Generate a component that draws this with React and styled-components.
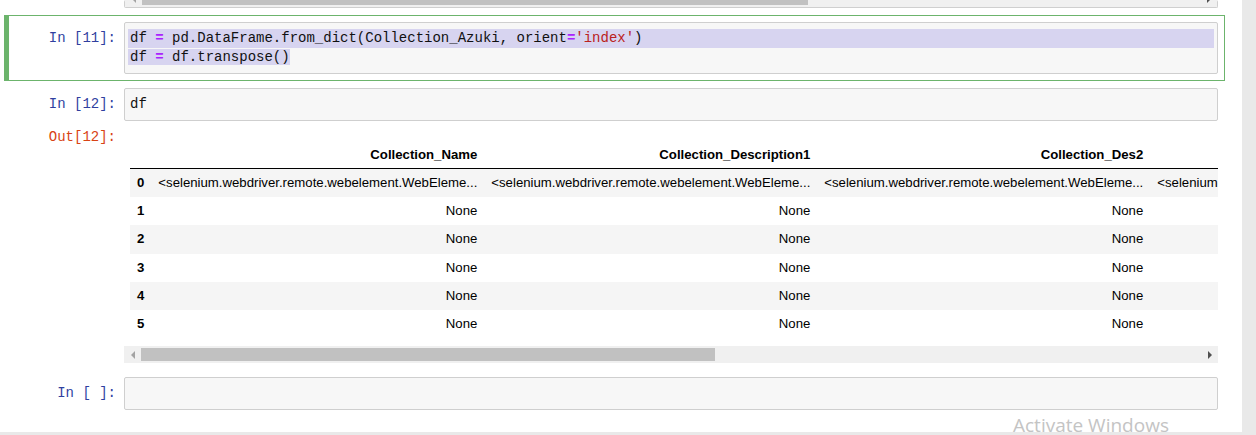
import React from 'react';
import styled, { createGlobalStyle } from 'styled-components';

const GlobalStyle = createGlobalStyle`
  html, body {
    margin: 0;
    padding: 0;
    background: #e9e9e9;
    overflow: hidden;
  }
`;

const Notebook = styled.div`
  position: relative;
  width: 1242px;
  height: 432px;
  background: #fff;
  overflow: hidden;
`;

const Cell = styled.div`
  box-sizing: border-box;
  width: 1221px;
  margin-left: 4px;
  border: 1px solid ${p => (p.$selected ? '#6cb46c' : 'transparent')};
  border-left-width: 5px;
  border-top-width: ${p => (p.$clipped ? '0' : '1px')};
  padding: ${p => (p.$clipped ? '0 6px 6px' : '6px')};
  display: flex;
  flex-direction: column;
`;

const Row = styled.div`
  display: flex;
  align-items: flex-start;
`;

const Prompt = styled.div`
  box-sizing: border-box;
  width: 109px;
  flex: none;
  padding: ${p => (p.$empty ? '0' : '7px 8px 0 0')};
  text-align: right;
  font-family: 'Liberation Mono', monospace;
  font-size: 14px;
  line-height: 19px;
  color: ${p => (p.$out ? '#d84315' : '#303f9f')};
  white-space: pre;
`;

const InputBox = styled.div`
  flex: 1;
  min-width: 0;
  box-sizing: border-box;
  height: ${p => p.$height || 'auto'};
  overflow: hidden;
  background: #f7f7f7;
  border: 1px solid #cfcfcf;
  border-top-width: ${p => (p.$clipped ? '0' : '1px')};
  border-radius: 2px;
  padding: ${p => (p.$clipped ? '0' : '6px 3px')};
  font-family: 'Liberation Mono', monospace;
  font-size: 14px;
  line-height: 19px;
  color: #111;
`;

const Line = styled.div`
  min-height: 19px;
  white-space: pre;
  padding-left: 2px;
  background: ${p => (p.$full ? '#d7d4f0' : 'transparent')};
`;

const Sel = styled.span`
  background: #d7d4f0;
  margin-left: -2px;
  padding-left: 2px;
`;

const Op = styled.span`
  color: #aa22ff;
  font-weight: bold;
`;

const Str = styled.span`
  color: #ba2121;
`;

const ScrollBar = styled.div`
  display: flex;
  height: 17px;
  flex: none;
  background: #f0f0f0;
  margin-top: ${p => p.$offset || '0'};
`;

const ArrowBtn = styled.div`
  width: 17px;
  flex: none;
  display: flex;
  align-items: center;
  justify-content: center;
`;

const Triangle = styled.span`
  width: 0;
  height: 0;
  border-top: 4px solid transparent;
  border-bottom: 4px solid transparent;
  ${p =>
    p.$dir === 'left'
      ? `border-right: 4px solid #a3a3a3;`
      : `border-left: 4px solid #505050;`}
`;

const Thumb = styled.div`
  flex: none;
  margin: 2px 0;
  background: #c1c1c1;
`;

const Spacer = styled.div`
  flex: 1;
`;

const OutputBody = styled.div`
  flex: 1;
  min-width: 0;
  overflow: hidden;
`;

const TableScroll = styled.div`
  overflow: hidden;
  padding: 20px 0 8px 6px;
`;

const Table = styled.table`
  border-collapse: collapse;
  border-spacing: 0;
  font-family: 'Liberation Sans', Arial, sans-serif;
  font-size: 13.2px;
  color: #000;

  th, td {
    padding: 7px;
    line-height: 14.2px;
    text-align: right;
    white-space: nowrap;
    vertical-align: middle;
  }

  thead th {
    line-height: 14px;
    padding-bottom: 6px;
    border-bottom: 1px solid #000;
    font-weight: bold;
  }

  tbody th {
    font-weight: bold;
    text-align: left;
  }

  tbody tr:nth-child(odd) {
    background: #f5f5f5;
  }
`;

const Watermark = styled.div`
  position: absolute;
  left: 1013px;
  top: 415px;
  font-family: 'Open Sans', sans-serif;
  font-size: 19px;
  line-height: 20px;
  color: #c4c4c4;
  white-space: nowrap;
  pointer-events: none;
`;

const Scroll = ({ thumb, offset }) => (
  <ScrollBar $offset={offset}>
    <ArrowBtn>
      <Triangle $dir="left" />
    </ArrowBtn>
    <Thumb style={{ width: thumb }} />
    <Spacer />
    <ArrowBtn>
      <Triangle $dir="right" />
    </ArrowBtn>
  </ScrollBar>
);

const ELEM = '<selenium.webdriver.remote.webelement.WebEleme...';
const columns = ['Collection_Name', 'Collection_Description1', 'Collection_Des2', 'Collection_Des3'];
const rows = [0, 1, 2, 3, 4, 5];

const App = () => (
  <Notebook>
    <GlobalStyle />

    <Cell $clipped>
      <Row>
        <Prompt $empty />
        <InputBox $clipped $height="8px">
          <Scroll thumb={666} offset="-10px" />
        </InputBox>
      </Row>
    </Cell>

    <Cell $selected>
      <Row>
        <Prompt>In [11]:</Prompt>
        <InputBox>
          <Line $full>
            df <Op>=</Op> pd.DataFrame.from_dict(Collection_Azuki, orient<Op>=</Op>
            <Str>'index'</Str>)
          </Line>
          <Line>
            <Sel>
              df <Op>=</Op> df.transpose()
            </Sel>
          </Line>
        </InputBox>
      </Row>
    </Cell>

    <Cell>
      <Row>
        <Prompt>In [12]:</Prompt>
        <InputBox>
          <Line>df</Line>
        </InputBox>
      </Row>
      <Row>
        <Prompt $out>Out[12]:</Prompt>
        <OutputBody>
          <TableScroll>
            <Table>
              <thead>
                <tr>
                  <th />
                  {columns.map(c => (
                    <th key={c}>{c}</th>
                  ))}
                </tr>
              </thead>
              <tbody>
                {rows.map(r => (
                  <tr key={r}>
                    <th>{r}</th>
                    {columns.map(c => (
                      <td key={c}>{r === 0 ? ELEM : 'None'}</td>
                    ))}
                  </tr>
                ))}
              </tbody>
            </Table>
          </TableScroll>
          <Scroll thumb={574} />
        </OutputBody>
      </Row>
    </Cell>

    <Cell>
      <Row>
        <Prompt>In [ ]:</Prompt>
        <InputBox>
          <Line />
        </InputBox>
      </Row>
    </Cell>

    <Watermark>Activate Windows</Watermark>
  </Notebook>
);

export default App;
